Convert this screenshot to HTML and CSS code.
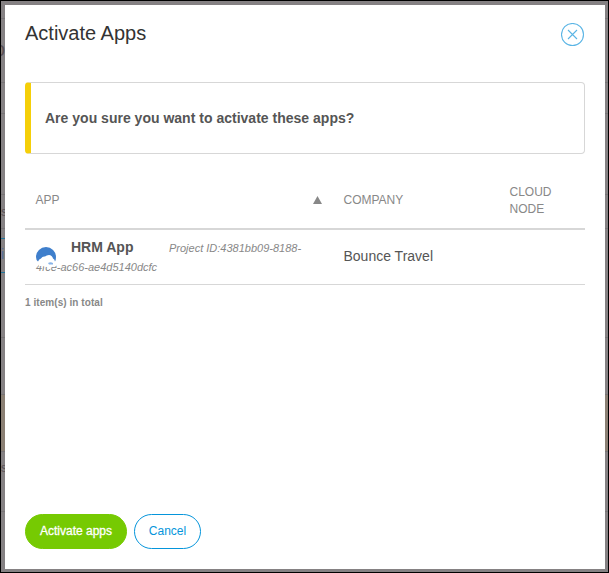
FILE: index.html
```html
<!DOCTYPE html>
<html lang="en">
<head>
<meta charset="utf-8">
<title>Activate Apps</title>
<link rel="stylesheet" href="styles.css">
</head>
<body>
<div class="page" aria-hidden="true">
  <div class="band h17"></div>
  <div class="band h64"><span class="bit bit-big">o</span></div>
  <div class="band h31"></div>
  <div class="band h80"></div>
  <div class="band h34"><span class="bit">s</span></div>
  <div class="band h10 teal"></div>
  <div class="band h34 teal"><span class="bit blue">i</span></div>
  <div class="band h65"></div>
  <div class="band h56"></div>
  <div class="band h56 tan"></div>
  <div class="band h60"><span class="bit bit-low">s</span></div>
</div>
<section class="modal" role="dialog" aria-labelledby="title">
  <header class="head">
    <h1 id="title">Activate Apps</h1>
    <button class="close" aria-label="Close">
      <svg width="24" height="24" viewBox="0 0 24 24" fill="none" stroke="#5bb5e5" stroke-width="1.1"><circle cx="11.5" cy="11.5" r="11"/><path d="M7 7l9 9M16 7l-9 9"/></svg>
    </button>
  </header>
  <div class="notice"><span>Are you sure you want to activate these apps?</span></div>
  <table>
    <colgroup><col class="c-app"><col class="c-company"><col></colgroup>
    <thead>
      <tr>
        <th><div class="sort"><span>APP</span><svg width="9" height="8" viewBox="0 0 9 8"><path d="M4.5 0L9 8H0z" fill="#888"/></svg></div></th>
        <th>COMPANY</th>
        <th>CLOUD<br>NODE</th>
      </tr>
    </thead>
    <tbody>
      <tr>
        <td>
          <div class="app">
            <svg class="logo" width="20" height="23" viewBox="0 0 20 23"><path d="M1 11H20V19Q18 20 16 20Q14 22 11 20Q8 20 7 19H3z" fill="#fff"/><path d="M0 10A10 10 0 0 1 20 10Q20 13 19 14.500Q18.500 12 17 11.500Q16 8 13 8Q10.500 8 9 9.500Q6.500 9 5 11.500Q3 12 2 14.500Q0 13 0 10z" fill="#3f7fcc"/><path d="M12 16q2.500-1.500 5 0v1.500h-4z" fill="#88b4e8"/></svg>
            <div class="line"><strong>HRM App</strong><em class="first">Project ID:4381bb09-8188-</em></div>
            <em class="rest">4fce-ac66-ae4d5140dcfc</em>
          </div>
        </td>
        <td class="company">Bounce Travel</td>
        <td></td>
      </tr>
    </tbody>
  </table>
  <p class="total">1 item(s) in total</p>
  <footer>
    <button class="btn primary"><span>Activate apps</span></button>
    <button class="btn"><span>Cancel</span></button>
  </footer>
</section>
</body>
</html>
```
FILE: styles.css
```css
* { box-sizing: border-box; }
body { margin: 0; width: 609px; height: 573px; overflow: hidden; font-family: "Liberation Sans", Arial, sans-serif; color: #555; }
button { font-family: inherit; cursor: pointer; }
.page { height: 573px; border: 1px solid #000; background: #858183; overflow: hidden; }
.band { border-bottom: 1px solid #777476; overflow: hidden; }
.h10 { height: 10px; }
.h17 { height: 18px; }
.h31 { height: 31px; }
.h34 { height: 34px; }
.h56 { height: 57px; }
.h60 { height: 60px; }
.h64 { height: 64px; }
.h65 { height: 65px; }
.h80 { height: 81px; }
.teal { border-image: linear-gradient(90deg, #21759b 50%, #858183 50%) 1; }
.tan { background: #8b8074; }
.bit { display: block; width: 10px; margin: 9px 0 0 0; font-size: 13px; line-height: 15px; color: #5a5156; }
.bit-big { margin: 18px 0 0 -7px; font-size: 20px; line-height: 24px; }
.bit-low { margin: 9px 0 0 0; font-size: 12px; }
.blue { margin: 8px 0 0 0; font-size: 14px; color: #526d9b; }

.modal { position: absolute; left: 5px; top: 5px; width: 600px; height: 564px; padding: 0 20px 20px; background: #fff; display: flex; flex-direction: column; }
.head { height: 77px; padding-top: 17px; display: flex; justify-content: space-between; align-items: flex-start; }
h1 { margin: 0; font-size: 20px; line-height: 23px; font-weight: 400; color: #333; }
.close { width: 24px; height: 24px; margin-top: 1px; padding: 0; border: 0; background: none; }
.close svg { display: block; }
.notice { height: 72px; flex: none; padding-left: 14px; display: flex; align-items: center; border: 1px solid #d7d7d7; border-left: 6px solid #f5cf09; border-radius: 4px; font-size: 14px; letter-spacing: .01px; font-weight: 700; }
table { width: 560px; margin-top: 21px; border-collapse: separate; border-spacing: 0; table-layout: fixed; }
.c-app { width: 308px; }
.c-company { width: 166px; }
th { height: 55px; padding: 0 11px 2px 10.500px; border-bottom: 2px solid #d7d7d7; font-size: 12px; line-height: 17px; font-weight: 400; text-align: left; color: #888; }
.sort { display: flex; justify-content: space-between; align-items: center; }
.sort svg { margin-top: -2px; }
td { height: 55px; padding: 0 0 0 11px; border-bottom: 1px solid #d7d7d7; vertical-align: middle; }
td.company { padding-bottom: 2px; padding-left: 10.500px; font-size: 14px; }
.app { position: relative; display: flex; flex-direction: column; }
.line { display: flex; align-items: baseline; padding-left: 35px; line-height: 20px; }
strong { font-size: 14px; width: 98px; }
em { font-size: 11px; color: #888; }
.rest { height: 20px; line-height: 18px; }
.logo { position: absolute; left: 0; top: 10px; z-index: 1; }
.total { margin: 10px 0 0; font-size: 10px; letter-spacing: .06px; line-height: 16px; font-weight: 700; color: #888; }
footer { margin-top: auto; display: flex; gap: 7px; }
.btn { height: 35px; width: 67px; padding: 0 0 1px; border: 1px solid #0595db; border-radius: 18px; background: #fff; color: #0595db; font-size: 12px; }
.primary { width: 102px; border-color: #76ca02; background: #76ca02; color: #fff; -webkit-text-stroke: .3px #fff; }
```
